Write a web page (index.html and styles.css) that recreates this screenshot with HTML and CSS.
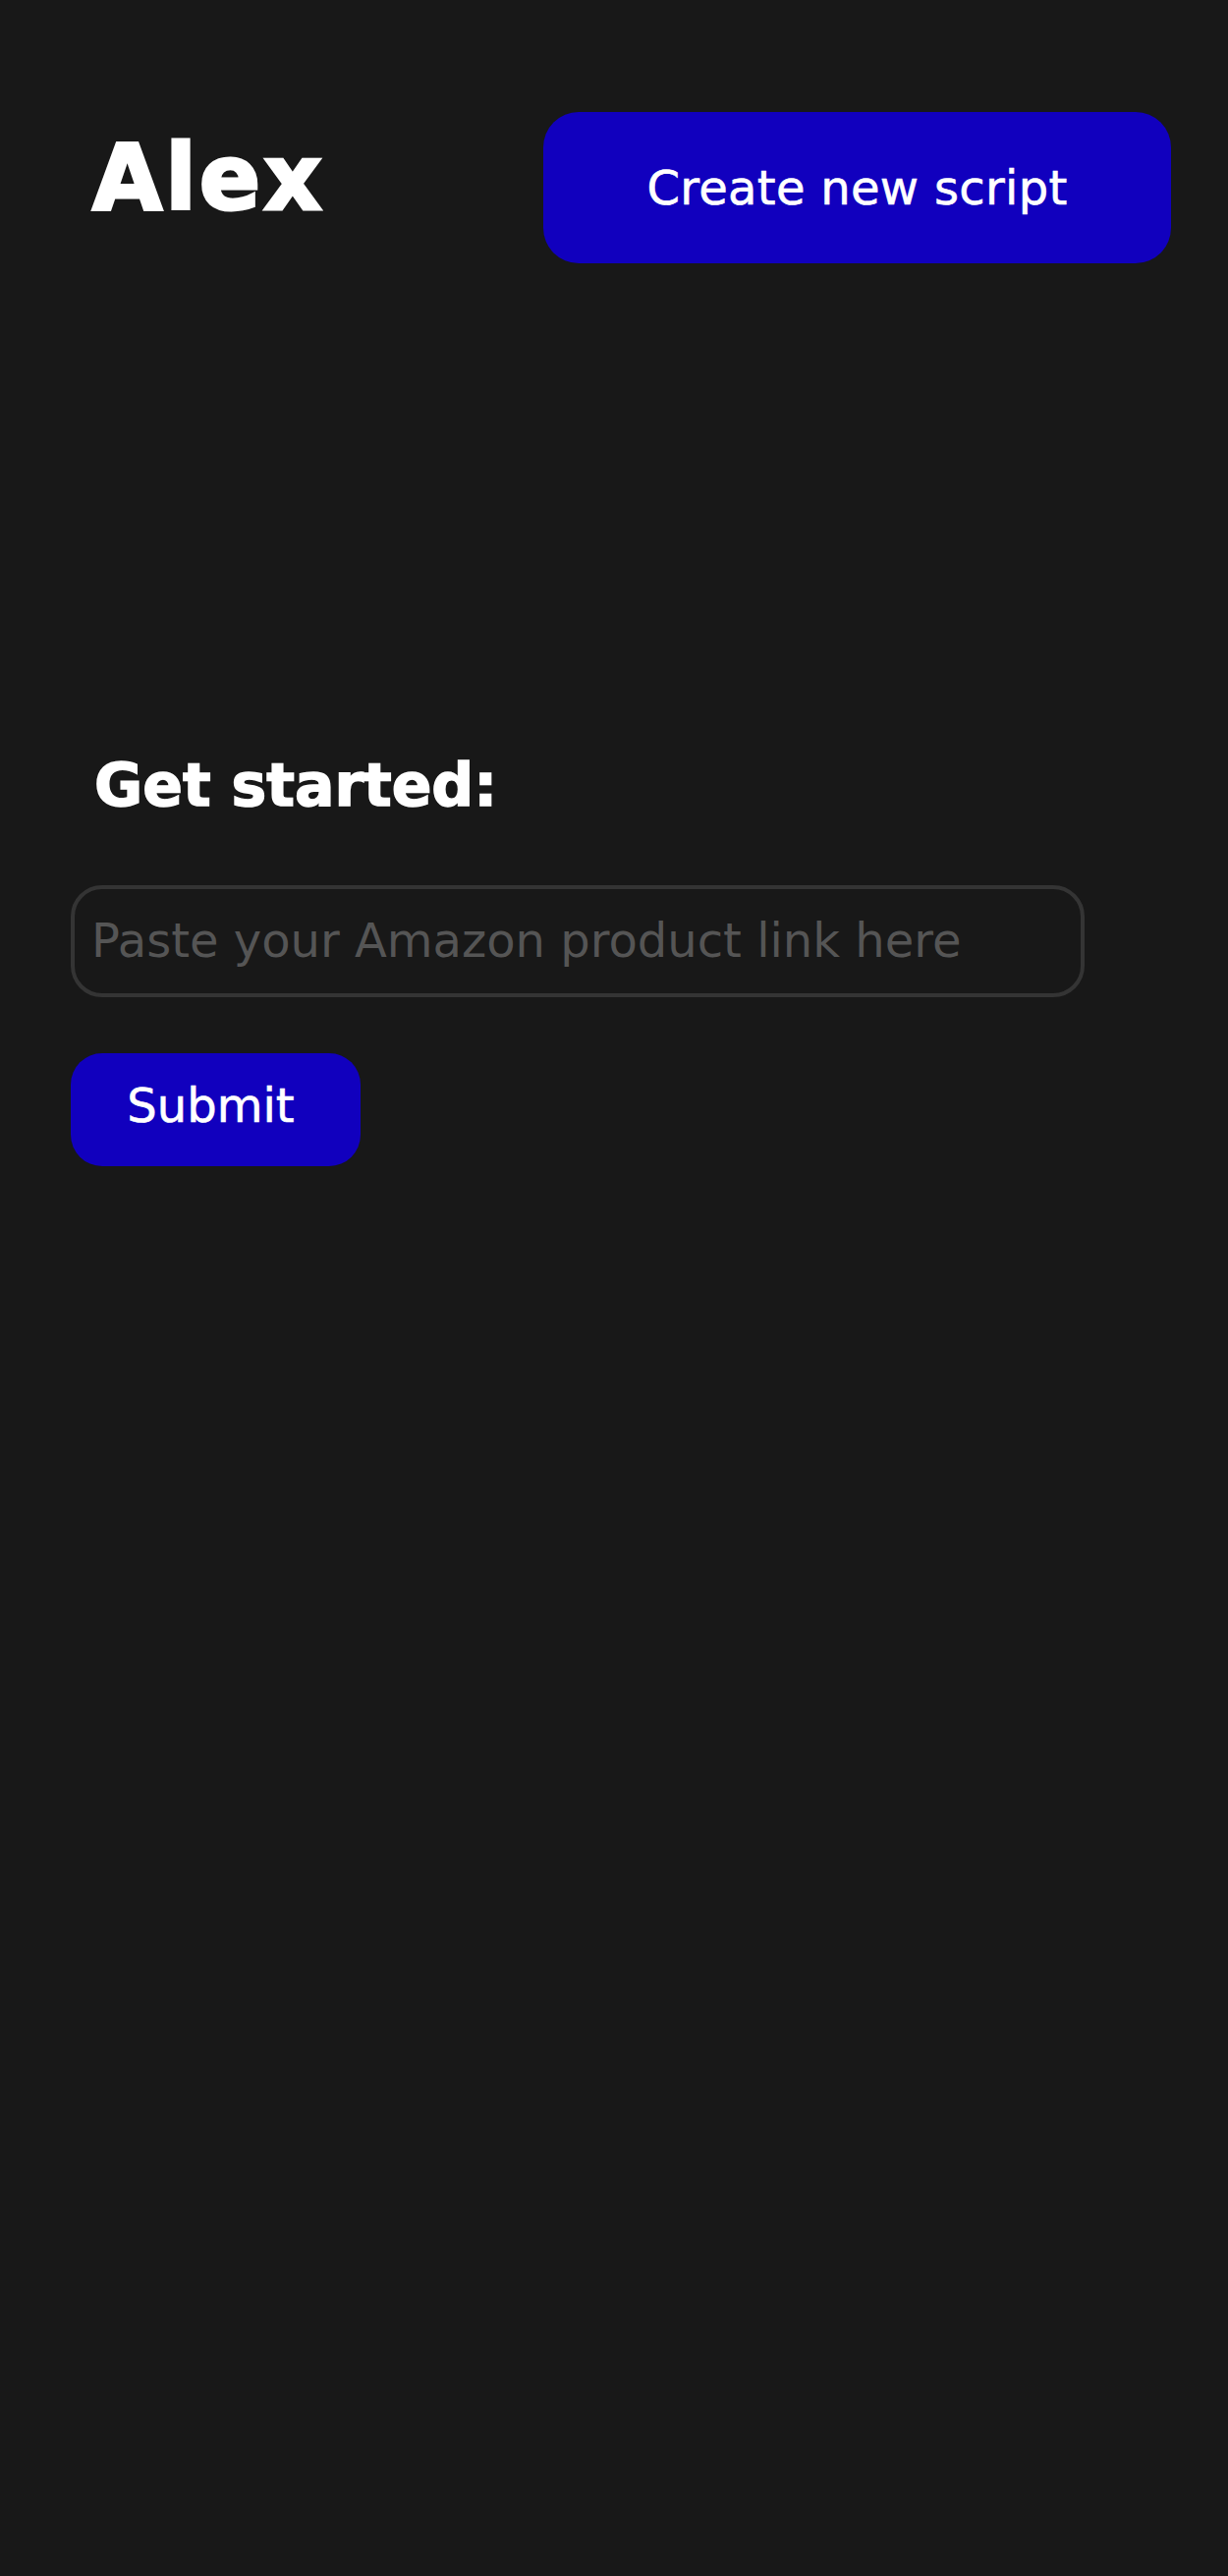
FILE: index.html
```html
<!DOCTYPE html>
<html lang="en">
<head>
<meta charset="utf-8">
<title>Alex</title>
<link rel="stylesheet" href="styles.css">
</head>
<body>
<div class="page">
  <header class="header">
    <div class="logo">Alex</div>
    <button class="btn btn-create" type="button">Create new script</button>
  </header>
  <main class="start">
    <h1 class="start-title">Get started:</h1>
    <input class="link-input" type="text" placeholder="Paste your Amazon product link here">
    <button class="btn btn-submit" type="button">Submit</button>
  </main>
</div>
</body>
</html>
```
FILE: styles.css
```css
html, body {
  margin: 0;
  padding: 0;
  background: #181818;
}
body {
  font-family: "DejaVu Sans", "Liberation Sans", sans-serif;
  color: #ffffff;
  min-height: 2622px;
}
.page {
  padding: 114px 58px 0 72px;
  display: flex;
  flex-direction: column;
}
.header {
  display: flex;
  justify-content: space-between;
  align-items: flex-start;
}
.logo {
  margin: 14px 0 0 22px;
  font-size: 92px;
  font-weight: 700;
  letter-spacing: 3px;
  line-height: normal;
  color: #ffffff;
  -webkit-text-stroke: 3px #ffffff;
}
.btn {
  border: none;
  background: #1100be;
  color: #ffffff;
  font-family: "DejaVu Sans", "Liberation Sans", sans-serif;
  font-size: 48px;
  line-height: normal;
  cursor: pointer;
  display: flex;
  align-items: center;
  justify-content: center;
}
.btn-create {
  width: 639px;
  height: 154px;
  border-radius: 36px;
  letter-spacing: 0.3px;
  -webkit-text-stroke: 0.6px #ffffff;
}
.start {
  margin-top: 496px;
  display: flex;
  flex-direction: column;
  align-items: flex-start;
}
.start-title {
  margin: 0 0 67px 24px;
  font-size: 60px;
  font-weight: 700;
  line-height: normal;
  letter-spacing: 0;
  -webkit-text-stroke: 1.5px #ffffff;
}
.link-input {
  box-sizing: border-box;
  width: 1032px;
  height: 114px;
  border: 4px solid #343434;
  border-radius: 32px;
  background: transparent;
  padding: 0 0 2px 17px;
  font-family: "DejaVu Sans", "Liberation Sans", sans-serif;
  font-size: 48px;
  color: #ffffff;
  outline: none;
}
.link-input::placeholder {
  color: #555555;
}
.btn-submit {
  box-sizing: border-box;
  margin-top: 57px;
  width: 295px;
  height: 115px;
  border-radius: 32px;
  padding: 0 10px 10px 0;
  -webkit-text-stroke: 0.6px #ffffff;
}
```
